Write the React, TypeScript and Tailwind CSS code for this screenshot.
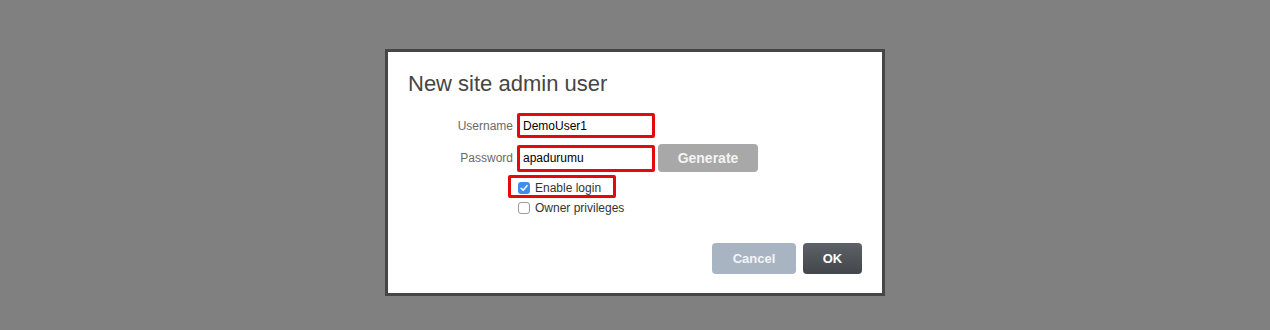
import React from 'react';

function Check({ checked }: { checked?: boolean }) {
  if (checked) {
    return (
      <span className="flex h-[12px] w-[12px] items-center justify-center rounded-[3px] bg-[#3d8ef0]">
        <svg viewBox="0 0 12 12" className="h-[10px] w-[10px]">
          <path d="M2.5 6.3 L5 8.6 L9.6 3.2" fill="none" stroke="#fff" strokeWidth="1.8" strokeLinecap="round" strokeLinejoin="round" />
        </svg>
      </span>
    );
  }
  return <span className="block h-[12px] w-[12px] rounded-[3px] border border-[#9a9a9a] bg-white" />;
}

export default function App() {
  return (
    <div className="h-[330px] w-full bg-[#808080] pt-[49px] font-['Liberation_Sans',Arial,sans-serif]">
      <div className="mx-auto h-[247px] w-[500px] border-[3px] border-[#464646] bg-white">
        <h1 className="pl-[20px] pt-[18px] text-[22px] leading-[28px] text-[#454545]">New site admin user</h1>

        <div className="mt-[15px] flex flex-col gap-[6px]">
          <div className="flex items-center">
            <label className="w-[125px] text-right text-[12px] text-[#6a6a6a]">Username</label>
            <div className="ml-[4px] flex h-[25px] w-[138px] items-center rounded-[2px] border-[3px] border-[#e20a0a] pl-[3px] text-[12px] text-black">
              DemoUser1
            </div>
          </div>
          <div className="flex items-center">
            <label className="w-[125px] text-right text-[12px] text-[#6a6a6a]">Password</label>
            <div className="ml-[4px] flex h-[27px] w-[138px] items-center rounded-[2px] border-[3px] border-[#e20a0a] pl-[3px] text-[12px] text-black">
              apadurumu
            </div>
            <button className="ml-[3px] h-[28px] w-[100px] rounded-[4px] bg-[#a8a8a8] text-[14px] font-bold text-[#f4f4f4]">
              Generate
            </button>
          </div>
        </div>

        <div className="ml-[120px] mt-[3px] flex flex-col items-start">
          <div className="flex h-[23px] w-[108px] items-center gap-[5px] rounded-[2px] border-[3px] border-[#e20a0a] pl-[7px] pt-[3px] text-[12px] text-[#333]">
            <Check checked />
            <span>Enable login</span>
          </div>
          <div className="flex h-[18px] items-center gap-[5px] pl-[10px] pt-[1px] text-[12px] text-[#333]">
            <Check />
            <span>Owner privileges</span>
          </div>
        </div>

        <div className="mt-[27px] flex justify-end gap-[7px] pr-[20px]">
          <button className="h-[31px] w-[84px] rounded-[4px] bg-[#a9b4c3] text-[13px] font-bold text-[#f2f4f7]">
            Cancel
          </button>
          <button className="h-[31px] w-[59px] rounded-[4px] bg-gradient-to-b from-[#5d6268] to-[#43474c] text-[13px] font-bold text-white">
            OK
          </button>
        </div>
      </div>
    </div>
  );
}
